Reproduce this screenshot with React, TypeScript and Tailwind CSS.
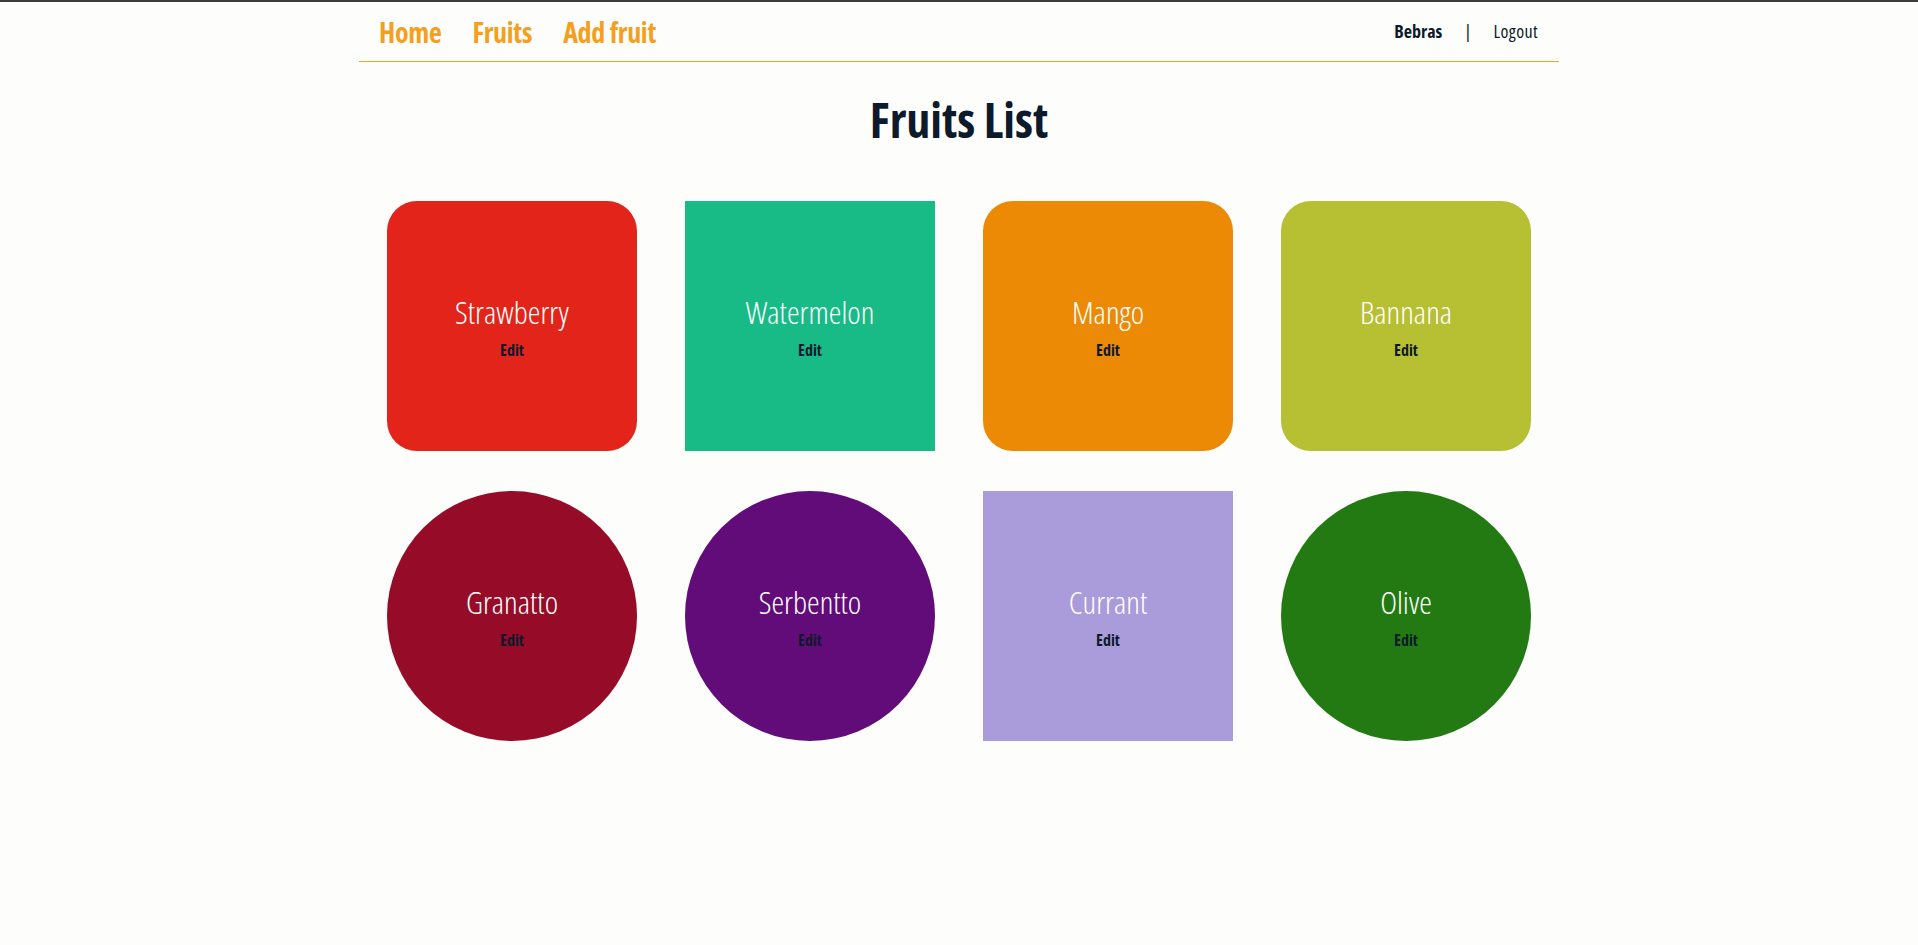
const fruits = [
  { name: 'Strawberry', bg: 'bg-[#e3241a]', shape: 'rounded-[30px]' },
  { name: 'Watermelon', bg: 'bg-[#18bb86]', shape: 'rounded-none' },
  { name: 'Mango', bg: 'bg-[#ec8a06]', shape: 'rounded-[30px]' },
  { name: 'Bannana', bg: 'bg-[#b7bf33]', shape: 'rounded-[30px]' },
  { name: 'Granatto', bg: 'bg-[#960b28]', shape: 'rounded-full' },
  { name: 'Serbentto', bg: 'bg-[#620c7a]', shape: 'rounded-full' },
  { name: 'Currant', bg: 'bg-[#aa9bdb]', shape: 'rounded-none' },
  { name: 'Olive', bg: 'bg-[#237a12]', shape: 'rounded-full' },
];

function FruitCard({ name, bg, shape }: { name: string; bg: string; shape: string }) {
  return (
    <div className={`w-[250px] h-[250px] pt-px flex flex-col items-center justify-center ${bg} ${shape}`}>
      <span className="text-[32px] leading-[40px] font-light text-white">{name}</span>
      <a href="#" className="mt-[6px] text-[16px] leading-[24px] font-bold text-[#0c1a2b]">
        Edit
      </a>
    </div>
  );
}

export default function App() {
  return (
    <div className="min-h-screen bg-[#fdfefb] border-t-2 border-[#3a3d38] font-['Open_Sans',sans-serif] font-stretch-condensed">
      <div className="w-[1200px] mx-auto">
        <nav className="h-[60px] flex items-center justify-between border-b border-[#f5a524] pl-5 pr-[21px]">
          <div className="flex items-center gap-[31px] text-[28px] font-bold tracking-[-0.3px] text-[#f59f20]">
            <a href="#">Home</a>
            <a href="#">Fruits</a>
            <a href="#">Add fruit</a>
          </div>
          <div className="flex items-center gap-[22px] text-[18px] text-[#0c1a2b]">
            <span className="font-bold">Bebras</span>
            <span>|</span>
            <a href="#" className="font-normal tracking-[0.4px]">Logout</a>
          </div>
        </nav>

        <h1 className="mt-[30px] mb-[53px] text-center text-[48px] leading-[56px] font-bold text-[#0c1a2b]">
          Fruits List
        </h1>

        <div className="grid grid-cols-[repeat(4,250px)] justify-center gap-x-12 gap-y-10">
          {fruits.map((f) => (
            <FruitCard key={f.name} {...f} />
          ))}
        </div>
      </div>
    </div>
  );
}
